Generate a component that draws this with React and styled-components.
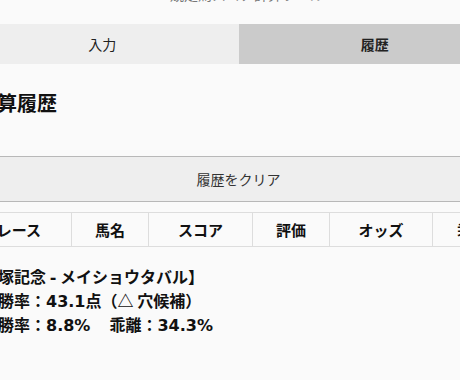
import styled, { createGlobalStyle } from "styled-components";

const GlobalStyle = createGlobalStyle`
  html, body {
    margin: 0;
    padding: 0;
    background: #fafafa;
    overflow: hidden;
  }
  body {
    font-family: "Noto Sans CJK JP", "Noto Sans", sans-serif;
    color: #222;
  }
`;

const columns = [
  { label: "レース", width: 105 },
  { label: "馬名", width: 77 },
  { label: "スコア", width: 104 },
  { label: "評価", width: 77 },
  { label: "オッズ", width: 103 },
  { label: "乖離", width: 79 },
];

function App() {
  return (
    <>
      <GlobalStyle />
      <Page>
        <Subtitle>〜 競走馬スコア計算ツール</Subtitle>

        <Tabs>
          <Tab>入力</Tab>
          <Tab active>履歴</Tab>
        </Tabs>

        <Heading>計算履歴</Heading>

        <ClearButton>履歴をクリア</ClearButton>

        <Table>
          <colgroup>
            {columns.map((c) => (
              <col key={c.label} style={{ width: c.width }} />
            ))}
          </colgroup>
          <thead>
            <tr>
              {columns.map((c) => (
                <th key={c.label}>{c.label}</th>
              ))}
            </tr>
          </thead>
        </Table>

        <Result>
          <p>【宝塚記念 <Num>-</Num> メイショウタバル】</p>
          <p>予想勝率：<Num>43.1</Num>点（△ 穴候補）</p>
          <p>
            予想勝率：<Num>8.8%</Num>
            <Gap />
            乖離：<Num>34.3%</Num>
          </p>
        </Result>
      </Page>
    </>
  );
}

export default App;

const Page = styled.div`
  width: 545px;
  margin-left: -34px;
  margin-top: -16px;
`;

const Subtitle = styled.div`
  height: 20px;
  line-height: 20px;
  font-size: 14px;
  color: #777;
  text-align: center;
  margin-bottom: 20px;
`;

const Tabs = styled.div`
  display: flex;
  height: 40px;
`;

const Tab = styled.div`
  flex: 1;
  display: flex;
  align-items: center;
  justify-content: center;
  font-size: 14px;
  color: #222;
  background: ${(p) => (p.active ? "#cbcbcb" : "#eeeeee")};
  font-weight: ${(p) => (p.active ? 700 : 400)};
`;

const Heading = styled.h2`
  margin: 25px 0 0 11px;
  font-size: 20px;
  line-height: 28px;
  font-weight: 700;
  color: #111;
`;

const ClearButton = styled.button`
  display: block;
  width: 100%;
  height: 46px;
  margin-top: 39px;
  background: #eeeeee;
  border: none;
  border-top: 1px solid #b8b8b8;
  border-bottom: 1px solid #b8b8b8;
  font-family: inherit;
  font-size: 14px;
  color: #333;
`;

const Table = styled.table`
  width: 100%;
  table-layout: fixed;
  border-collapse: collapse;
  margin-top: 10px;

  th {
    height: 33px;
    padding: 0;
    border: 1px solid #dddddd;
    font-size: 15px;
    font-weight: 700;
    color: #111;
    text-align: center;
  }
`;

const Result = styled.div`
  margin-top: 18px;

  p {
    margin: 0;
    font-size: 16px;
    line-height: 23px;
    font-weight: 700;
    color: #111;
  }
`;

const Num = styled.span`
  font-family: "DejaVu Sans", sans-serif;
`;

const Gap = styled.span`
  display: inline-block;
  width: 19px;
`;
